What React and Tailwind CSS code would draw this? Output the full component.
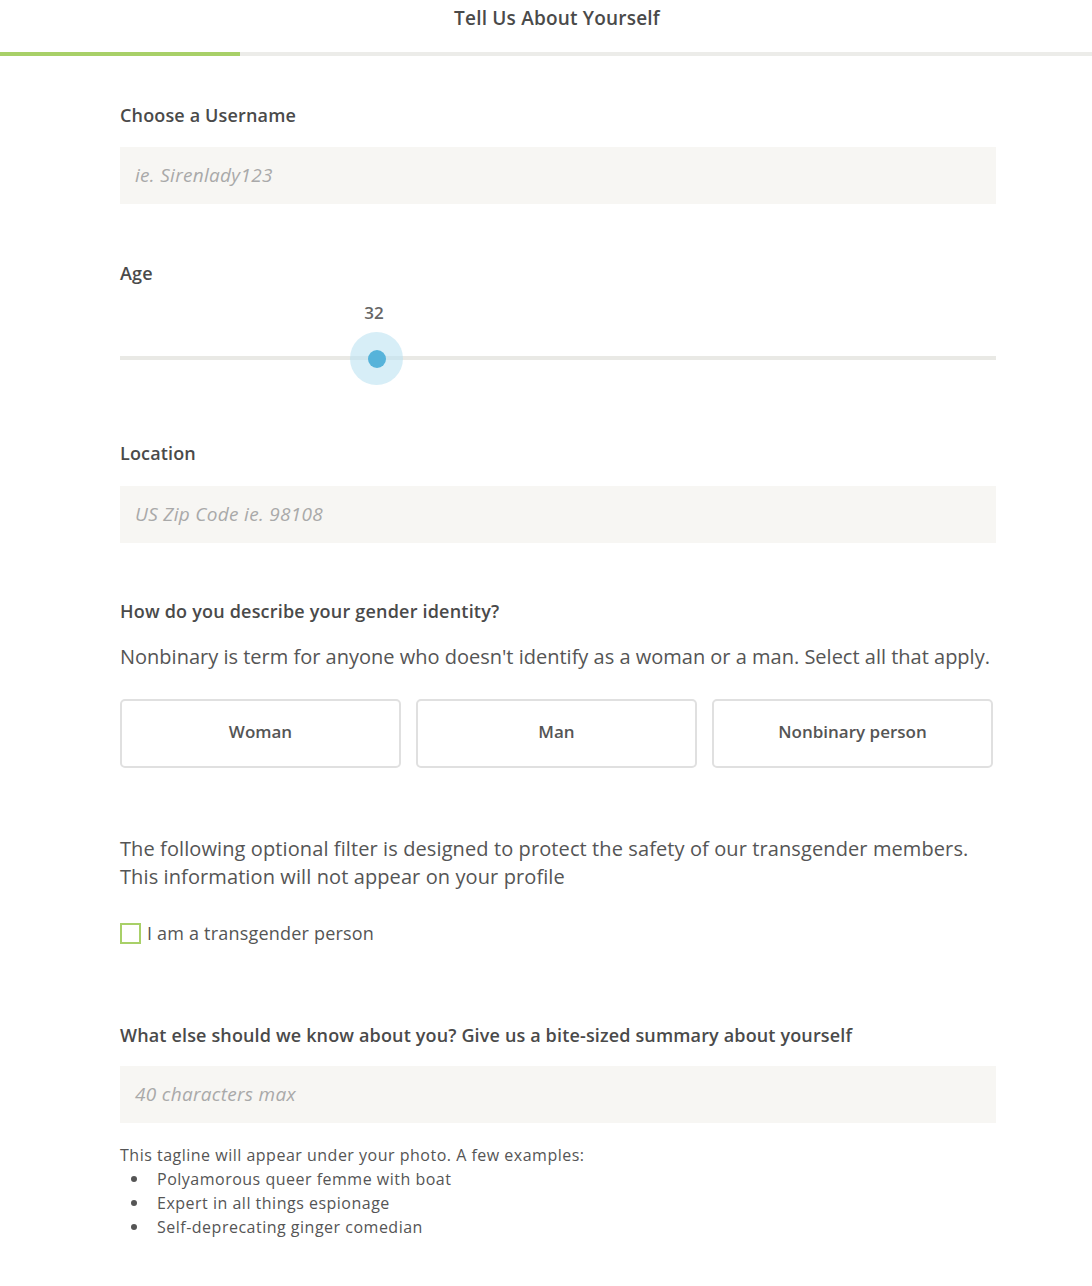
import React from "react";

export default function App() {
  const font = { fontFamily: "'Open Sans', Lato, sans-serif" };
  const bullets = [
    "Polyamorous queer femme with boat",
    "Expert in all things espionage",
    "Self-deprecating ginger comedian",
  ];
  return (
    <div className="w-[1092px] min-h-[1286px] bg-white text-[#4a4a4a]" style={font}>
      <div className="h-[52px] flex items-start justify-center pt-[5px] pl-[22px]">
        <h1 className="text-[19px] font-semibold text-[#4a4a4a] leading-[26px] tracking-[0.2px]">Tell Us About Yourself</h1>
      </div>
      <div className="h-[4px] bg-[#ecece9] flex">
        <div className="w-[240px] bg-[#a8d068]" />
      </div>

      <div className="px-[120px] pr-[96px]">
        {/* Username */}
        <div className="pt-[47px]">
          <label className="block text-[18px] font-semibold leading-[24px] tracking-[0.15px] text-[#4a4a4a]">Choose a Username</label>
          <div className="mt-[20px] h-[57px] bg-[#f7f6f3] flex items-center px-[15px]">
            <span className="italic text-[19px] tracking-[0.3px] text-[#a9a9a9]">ie. Sirenlady123</span>
          </div>
        </div>

        {/* Age */}
        <div className="pt-[57px]">
          <label className="block text-[18px] font-semibold leading-[24px] tracking-[0.15px]">Age</label>
          <div className="relative h-[124px]">
            <div className="absolute left-[242px] top-[17px] w-[24px] text-center text-[17px] font-semibold text-[#666] leading-[22px]">32</div>
            <div className="absolute left-0 right-0 top-[71px] h-[4px] bg-[#e9e9e5]" />
            <div className="absolute left-[230px] top-[47px] w-[53px] h-[53px] rounded-full bg-[#bde3f1]/60 flex items-center justify-center">
              <div className="w-[18px] h-[18px] rounded-full bg-[#56b3da]" />
            </div>
          </div>
        </div>

        {/* Location */}
        <div className="pt-[32px]">
          <label className="block text-[18px] font-semibold leading-[24px] tracking-[0.15px]">Location</label>
          <div className="mt-[21px] h-[57px] bg-[#f7f6f3] flex items-center px-[15px]">
            <span className="italic text-[19px] tracking-[0.3px] text-[#a9a9a9]">US Zip Code ie. 98108</span>
          </div>
        </div>

        {/* Gender */}
        <div className="pt-[56px]">
          <label className="block text-[18px] font-semibold leading-[24px] tracking-[0.2px]">How do you describe your gender identity?</label>
          <p className="mt-[21px] text-[20px] leading-[26px] text-[#555]">
            Nonbinary is term for anyone who doesn't identify as a woman or a man. Select all that apply.
          </p>
          <div className="mt-[29px] flex gap-[15px]">
            {["Woman", "Man", "Nonbinary person"].map((t) => (
              <button
                key={t}
                className="w-[281px] h-[69px] pb-[4px] border-2 border-[#e0e0e0] rounded-[5px] bg-white text-[17px] font-semibold text-[#555]"
              >
                {t}
              </button>
            ))}
          </div>
        </div>

        {/* Transgender */}
        <div className="pt-[67px]">
          <p className="text-[20px] leading-[28px] text-[#555] tracking-[0.1px]">
            The following optional filter is designed to protect the safety of our transgender members.
            <br />
            This information will not appear on your profile
          </p>
          <label className="mt-[30px] flex items-center gap-[6px]">
            <span className="w-[21px] h-[21px] border-2 border-[#a8d068] bg-white" />
            <span className="text-[18px] text-[#555] leading-[24px] tracking-[0.2px]">I am a transgender person</span>
          </label>
        </div>

        {/* Summary */}
        <div className="pt-[78px]">
          <label className="block text-[18px] font-semibold leading-[24px] tracking-[0.15px]">
            What else should we know about you? Give us a bite-sized summary about yourself
          </label>
          <div className="mt-[19px] h-[57px] bg-[#f7f6f3] flex items-center px-[15px]">
            <span className="italic text-[19px] tracking-[0.3px] text-[#a9a9a9]">40 characters max</span>
          </div>
          <div className="mt-[20px] text-[16px] leading-[24px] text-[#555] tracking-[0.5px]">
            <p>This tagline will appear under your photo. A few examples:</p>
            <ul>
              {bullets.map((b) => (
                <li key={b} className="flex items-center">
                  <span className="w-[37px] pl-[11px] flex items-center">
                    <span className="w-[6px] h-[6px] rounded-full bg-[#555]" />
                  </span>
                  <span>{b}</span>
                </li>
              ))}
            </ul>
          </div>
        </div>
      </div>
    </div>
  );
}
